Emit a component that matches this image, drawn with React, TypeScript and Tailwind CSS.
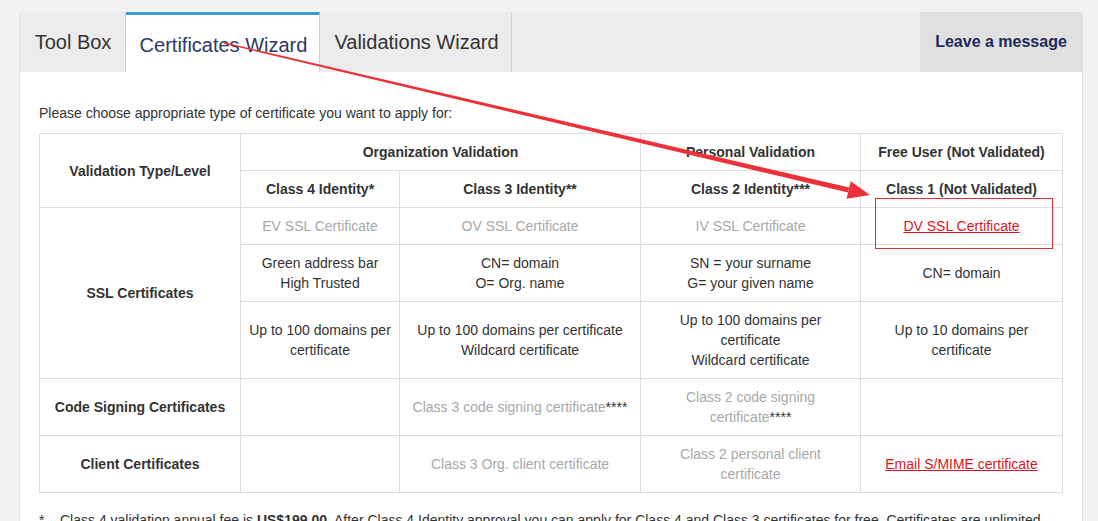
import React from "react";

const grey = "text-[#a8a8a8]";

const Cell: React.FC<{ children?: React.ReactNode; className?: string; rowSpan?: number; colSpan?: number }> = ({
  children,
  className = "",
  rowSpan,
  colSpan,
}) => (
  <td
    rowSpan={rowSpan}
    colSpan={colSpan}
    className={`border border-[#dcdcdc] px-2 py-2 text-center align-middle leading-5 ${className}`}
  >
    {children}
  </td>
);

const App: React.FC = () => {
  return (
    <div
      className="relative h-[521px] w-[1098px] overflow-hidden bg-[#f2f2f2] pt-3 pl-[19px] text-[14px] text-[#333]"
      style={{ fontFamily: '"Liberation Sans", Arial, sans-serif' }}
    >
      <div className="w-[1064px] border border-t-0 border-[#e2e2e2] bg-white">
        {/* Tab bar */}
        <div className="flex h-[60px] bg-[#ececec]">
          <div className="flex w-[106px] items-center justify-center border-r border-[#d2d2d2] pl-[1px] text-[20px] text-[#333]">
            Tool Box
          </div>
          <div className="flex w-[194px] items-center justify-center border-t-[3px] border-r border-t-[#3a9fc8] border-r-[#d2d2d2] bg-white pt-[3px] pl-[2px] text-[20px] text-[#2c3866]">
            Certificates Wizard
          </div>
          <div className="flex w-[192px] items-center justify-center border-r border-[#d2d2d2] pl-[2px] text-[20px] text-[#333]">
            Validations Wizard
          </div>
          <div className="flex-1" />
          <div className="flex w-[162px] items-center justify-center bg-[#e0e0e0] text-[16px] font-bold text-[#1d2a5c]">
            Leave a message
          </div>
        </div>

        {/* Content */}
        <div className="px-[19px] pt-[31px] pb-10">
          <p className="mb-[10px] leading-5">Please choose appropriate type of certificate you want to apply for:</p>
          <table className="w-[1023px] table-fixed border-collapse">
            <colgroup>
              <col className="w-[201px]" />
              <col className="w-[159px]" />
              <col className="w-[241px]" />
              <col className="w-[220px]" />
              <col className="w-[202px]" />
            </colgroup>
            <tbody>
              <tr>
                <Cell rowSpan={2} className="font-bold">Validation Type/Level</Cell>
                <Cell colSpan={2} className="font-bold">Organization Validation</Cell>
                <Cell className="font-bold">Personal Validation</Cell>
                <Cell className="font-bold">Free User (Not Validated)</Cell>
              </tr>
              <tr>
                <Cell className="font-bold">Class 4 Identity*</Cell>
                <Cell className="font-bold">Class 3 Identity**</Cell>
                <Cell className="font-bold">Class 2 Identity***</Cell>
                <Cell className="font-bold">Class 1 (Not Validated)</Cell>
              </tr>
              <tr>
                <Cell rowSpan={3} className="font-bold">SSL Certificates</Cell>
                <Cell className={grey}>EV SSL Certificate</Cell>
                <Cell className={grey}>OV SSL Certificate</Cell>
                <Cell className={grey}>IV SSL Certificate</Cell>
                <Cell>
                  <a href="#" className="text-[#e0141e] underline">DV SSL Certificate</a>
                </Cell>
              </tr>
              <tr>
                <Cell>Green address bar<br />High Trusted</Cell>
                <Cell>CN= domain<br />O= Org. name</Cell>
                <Cell>SN = your surname<br />G= your given name</Cell>
                <Cell>CN= domain</Cell>
              </tr>
              <tr>
                <Cell className="h-[77px]">Up to 100 domains per certificate</Cell>
                <Cell>Up to 100 domains per certificate<br />Wildcard certificate</Cell>
                <Cell>Up to 100 domains per certificate<br />Wildcard certificate</Cell>
                <Cell>Up to 10 domains per certificate</Cell>
              </tr>
              <tr>
                <Cell className="h-[57px] font-bold">Code Signing Certificates</Cell>
                <Cell />
                <Cell className={grey}>
                  Class 3 code signing certificate<span className="text-[#333]">****</span>
                </Cell>
                <Cell className={grey}>
                  Class 2 code signing certificate<span className="text-[#333]">****</span>
                </Cell>
                <Cell />
              </tr>
              <tr>
                <Cell className="h-[57px] font-bold">Client Certificates</Cell>
                <Cell />
                <Cell className={grey}>Class 3 Org. client certificate</Cell>
                <Cell className={grey}>Class 2 personal client certificate</Cell>
                <Cell>
                  <a href="#" className="text-[#e0141e] underline">Email S/MIME certificate</a>
                </Cell>
              </tr>
            </tbody>
          </table>
          <div className="mt-[17px] flex leading-5">
            <span className="w-[21px]">*</span>
            <span>
              Class 4 validation annual fee is <b>US$199.00</b>. After Class 4 Identity approval you can apply for Class 4 and Class 3
              certificates for free. Certificates are unlimited.
            </span>
          </div>
        </div>
      </div>

      {/* Red annotation */}
      <svg className="pointer-events-none absolute top-0 left-0" width="1098" height="521">
        <polygon points="224.2,42.3 849.2,187.6 848,192.4 223.8,43.7" fill="#ec3238" />
        <polygon points="870,195 846.5,198.7 850.7,181.2" fill="#ec3238" />
        <rect x="875.5" y="198.5" width="177" height="50" fill="none" stroke="#dd3035" strokeWidth="1" />
      </svg>
    </div>
  );
};

export default App;
